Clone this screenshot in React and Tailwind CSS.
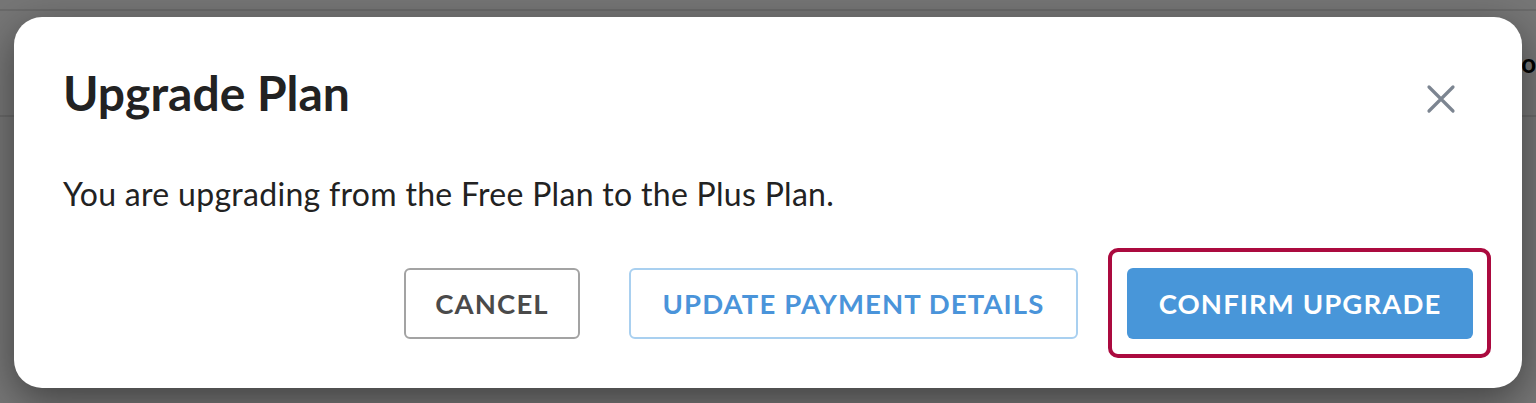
import React from 'react';

const CloseIcon = () => (
  <svg width="30" height="30" viewBox="0 0 30 30" fill="none">
    <path d="M3 3 L27 27 M27 3 L3 27" stroke="#7c8591" strokeWidth="3.2" strokeLinecap="round" />
  </svg>
);

const UpgradeModal = () => {
  return (
    <div className="absolute left-[14px] top-[17px] w-[1508px] h-[371px] rounded-[28px] bg-white shadow-[0_12px_40px_rgba(0,0,0,0.45)] px-[49px] pt-[48px]">
      <div className="flex justify-between items-start">
        <h2 className="text-[48px] leading-[56px] font-bold text-[#222]">Upgrade Plan</h2>
        <button className="mt-[19px] mr-[17px]">
          <CloseIcon />
        </button>
      </div>

      <p className="mt-[53px] text-[32px] leading-[40px] tracking-[0.3px] text-[#222]">
        You are upgrading from the Free Plan to the Plus Plan.
      </p>

      <div className="mt-[54px] flex justify-end gap-[49px]">
        <button className="h-[71px] w-[176px] rounded-[6px] border-2 border-[#a3a3a3] text-[27.5px] font-bold text-[#4a4a4a] tracking-[1.1px]">
          CANCEL
        </button>
        <button className="h-[71px] w-[449px] rounded-[6px] border-2 border-[#a9d0f0] text-[27.5px] font-bold text-[#4a94da] tracking-[1.1px]">
          UPDATE PAYMENT DETAILS
        </button>
        <div className="relative">
          <button className="h-[71px] w-[346px] rounded-[6px] bg-[#4896d9] text-[27.5px] font-bold text-white tracking-[1.1px]">
            CONFIRM UPGRADE
          </button>
          {/* focus ring */}
          <span className="absolute -left-[19px] -right-[18px] -top-[20px] -bottom-[19px] rounded-[10px] border-4 border-[#ab0a3f] pointer-events-none" />
        </div>
      </div>
    </div>
  );
};

export default function App() {
  return (
    <div className="relative w-full h-[403px] overflow-hidden bg-[#767676] font-['Lato','Liberation_Sans',sans-serif]">
      <div className="h-[11px] border-b-2 border-[#6a6a6a]" />
      <div className="h-[106px] flex justify-end items-center border-b-2 border-[#6a6a6a]">
        <span className="mr-[-10px] text-[26px] font-bold text-black">or</span>
      </div>
      <UpgradeModal />
    </div>
  );
}
